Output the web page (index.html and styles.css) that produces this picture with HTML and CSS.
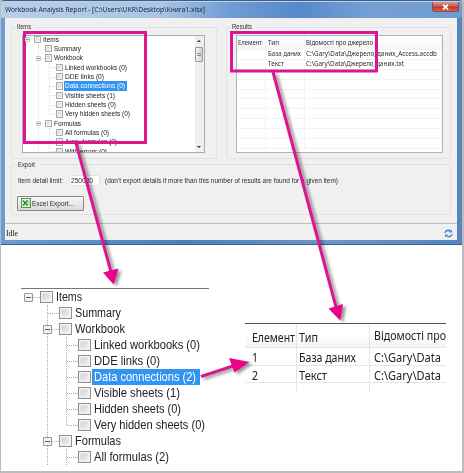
FILE: index.html
```html
<!DOCTYPE html>
<html lang="uk">
<head>
<meta charset="utf-8">
<title>Workbook Analysis Report</title>
<link rel="stylesheet" href="styles.css">
</head>
<body>
<div class="page">
  <section class="window">
    <header class="titlebar"><span class="fit" data-w="200">Workbook Analysis Report - [C:\Users\UKR\Desktop\Книга1.xlsx]</span>
      <span class="close"><svg width="7" height="6" viewBox="0 0 7 6"><path d="M1 .7 6 5.3M6 .7 1 5.3" stroke="#fff" stroke-width="1.7"/></svg></span>
    </header>
    <div class="client">
      <div class="groups">
        <div class="group group-items">
          <span class="legend"><span class="fit" data-w="14">Items</span></span>
          <div class="listbox">
            <div class="tree small">
              <div class="row open"><i class="exp"></i><i class="cb"></i><span class="fit" data-w="16">Items</span></div>
              <div class="kids">
                <div class="row"><i class="cb"></i><span class="fit" data-w="27">Summary</span></div>
                <div class="row open"><i class="exp"></i><i class="cb"></i><span class="fit" data-w="29">Workbook</span></div>
                <div class="kids closed">
                  <div class="row"><i class="cb"></i><span class="fit" data-w="62">Linked workbooks (0)</span></div>
                  <div class="row"><i class="cb"></i><span class="fit" data-w="39">DDE links (0)</span></div>
                  <div class="row"><i class="cb"></i><b class="sel"></b><span class="fit picked" data-w="60">Data connections (0)</span></div>
                  <div class="row"><i class="cb"></i><span class="fit" data-w="50">Visible sheets (1)</span></div>
                  <div class="row"><i class="cb"></i><span class="fit" data-w="51">Hidden sheets (0)</span></div>
                  <div class="row"><i class="cb"></i><span class="fit" data-w="65">Very hidden sheets (0)</span></div>
                </div>
                <div class="row open"><i class="exp"></i><i class="cb"></i><span class="fit" data-w="27">Formulas</span></div>
                <div class="kids">
                  <div class="row"><i class="cb"></i><span class="fit" data-w="44">All formulas (0)</span></div>
                  <div class="row"><i class="cb"></i><span class="fit" data-w="52">Array formulas (0)</span></div>
                  <div class="row"><i class="cb"></i><span class="fit" data-w="42">With errors (0)</span></div>
                </div>
              </div>
            </div>
            <div class="scroll"><i class="up"></i><i class="thumb"></i><i class="down"></i></div>
          </div>
        </div>
        <div class="group group-results">
          <span class="legend"><span class="fit" data-w="20">Results</span></span>
          <div class="results">
            <div class="cells head"><p><span class="fit" data-w="24">Елемент</span></p><p><span class="fit" data-w="11">Тип</span></p><p><span class="fit" data-w="67">Відомості про джерело</span></p></div>
            <div class="cells"><p></p><p><span class="fit" data-w="33">База даних</span></p><p><span class="fit" data-w="131">C:\Gary\Data\Джерело_даних_Access.accdb</span></p></div>
            <div class="cells"><p></p><p><span class="fit" data-w="16">Текст</span></p><p><span class="fit" data-w="98">C:\Gary\Data\Джерело_даних.txt</span></p></div>
            <div class="cells"><p></p><p></p><p></p></div>
            <div class="cells"><p></p><p></p><p></p></div>
            <div class="cells"><p></p><p></p><p></p></div>
            <div class="cells"><p></p><p></p><p></p></div>
            <div class="cells"><p></p><p></p><p></p></div>
            <div class="cells"><p></p><p></p><p></p></div>
            <div class="cells"><p></p><p></p><p></p></div>
            <div class="cells"><p></p><p></p><p></p></div>
          </div>
        </div>
      </div>
      <div class="group group-export">
        <span class="legend"><span class="fit" data-w="17">Export</span></span>
        <div class="limit"><label><span class="fit" data-w="45">Item detail limit:</span></label><div class="input"><span class="fit" data-w="22">250000</span></div><span class="fit" data-w="233">(don't export details if more than this number of results are found for a given item)</span></div>
        <div class="button">
          <svg width="10" height="10" viewBox="0 0 10 10"><rect x=".5" y=".5" width="9" height="9" fill="#e5f3e2" stroke="#4b9a4c"/><path d="M6 3h3M6 5h3M6 7h3" stroke="#8dbd87" stroke-width=".7"/><path d="m2 2.500 4.500 5m0-5L2 7.500" stroke="#2f8637" stroke-width="1.500"/></svg>
          <span class="fit" data-w="42">Excel Export...</span>
        </div>
      </div>
      <footer class="status"><span class="fit" data-w="12">Idle</span>
        <svg width="9" height="9" viewBox="0 0 9 9" fill="none" stroke="#3f88d0" stroke-width="1.5"><path d="M1 4C1.300 1.500 4.500.4 6.500 2.500M8 5C7.700 7.500 4.500 8.600 2.500 6.500"/><path d="M8 .5v3H5zM1 8.500v-3h3z" fill="#3f88d0" stroke="none"/></svg>
      </footer>
    </div>
  </section>

  <section class="details">
    <div class="tree large">
      <div class="row open"><i class="exp"></i><i class="cb"></i><span class="fit" data-w="26">Items</span></div>
      <div class="kids">
        <div class="row"><i class="cb"></i><span class="fit" data-w="46">Summary</span></div>
        <div class="row open"><i class="exp"></i><i class="cb"></i><span class="fit" data-w="50">Workbook</span></div>
        <div class="kids closed">
          <div class="row"><i class="cb"></i><span class="fit" data-w="106">Linked workbooks (0)</span></div>
          <div class="row"><i class="cb"></i><span class="fit" data-w="66">DDE links (0)</span></div>
          <div class="row"><i class="cb"></i><b class="sel"></b><span class="fit picked" data-w="102">Data connections (2)</span></div>
          <div class="row"><i class="cb"></i><span class="fit" data-w="86">Visible sheets (1)</span></div>
          <div class="row"><i class="cb"></i><span class="fit" data-w="87">Hidden sheets (0)</span></div>
          <div class="row"><i class="cb"></i><span class="fit" data-w="111">Very hidden sheets (0)</span></div>
        </div>
        <div class="row open"><i class="exp"></i><i class="cb"></i><span class="fit" data-w="46">Formulas</span></div>
        <div class="kids">
          <div class="row"><i class="cb"></i><span class="fit" data-w="75">All formulas (2)</span></div>
        </div>
      </div>
    </div>
    <div class="sources">
      <div class="cells head"><p><span class="fit" data-w="43">Елемент</span></p><p><span class="fit" data-w="19">Тип</span></p><p class="raised"><span class="fit" data-w="72">Відомості про</span></p></div>
      <div class="cells"><p><span class="fit" data-w="6">1</span></p><p><span class="fit" data-w="57">База даних</span></p><p><span class="fit" data-w="67">C:\Gary\Data</span></p></div>
      <div class="cells"><p><span class="fit" data-w="6">2</span></p><p><span class="fit" data-w="28">Текст</span></p><p><span class="fit" data-w="67">C:\Gary\Data</span></p></div>
      <div class="cells stub"><p></p><p></p><p></p></div>
    </div>
  </section>

  <svg class="callouts" width="464" height="473" viewBox="0 0 464 473">
    <g fill="none" stroke="#dc1590" stroke-width="3">
      <rect x="24.500" y="32.500" width="121" height="110"/>
      <rect x="231.500" y="32.500" width="145" height="38.500"/>
    </g>
    <g class="arrows" stroke="#dc1590" stroke-width="3">
      <path d="M76 143 111 272"/><path d="M273 72 336 307"/><path d="M201 376.500 233 366"/>
      <g fill="#ec008c" stroke="none"><path d="M103 272.500 118.500 268.500 113.700 284.500z"/><path d="M328.500 308.500 343 304 340.300 320.500z"/><path d="M229 358 249.500 362 234.500 372.500z"/></g>
    </g>
  </svg>
</div>
<script src="fit.js"></script>
</body>
</html>
```
FILE: fit.js
```js
document.querySelectorAll('.fit').forEach(function (el) {
  var natural = el.getBoundingClientRect().width;
  el.style.transform = 'scaleX(' + Number(el.dataset.w) / natural + ')';
});
```
FILE: styles.css
```css
* { box-sizing: border-box; }
body { margin: 0; background: #fff; font-family: "Liberation Sans", sans-serif; color: #222; }
p { margin: 0; }
.page { position: relative; width: 464px; height: 473px; overflow: hidden; border: solid #bcbcbc; border-width: 0 2px 2px 1px; }
.fit { display: inline-block; white-space: pre; transform-origin: 0 50%; }

/* window */
.window { width: 463px; height: 245px; margin-left: -1px; padding: 0 5px 4px; position: relative; background: linear-gradient(90deg, #6c9cd3, #4c7fbd 40%, #6b96c9 70%, #5585bf); border: 1px solid #395d8c; border-width: 1px 1px 1px 0; border-radius: 4px 4px 0 0; }
.titlebar { height: 17px; margin: 0 -5px; padding-left: 5px; line-height: 14px; font-family: "Noto Sans", sans-serif; font-size: 7.5px; color: #182338; background: linear-gradient(90deg, #b9cfe9 0, #a9c4e4 35%, #6e9bd2 50%, #5589ca 65%, #76a0d4 80%, #6f9bcf); border-top: 1px solid #bdd3ed; border-radius: 3px 3px 0 0; overflow: hidden; display: flex; justify-content: space-between; }
.titlebar .fit { width: max-content; }
.close { width: 27px; height: 10px; margin-right: 3px; display: flex; align-items: center; justify-content: center; background: linear-gradient(#dc9c90, #c75043 50%, #b53022 51%, #cf6552); border: 1px solid #8d4c50; border-top: 0; border-radius: 0 0 3px 3px; }
.client { height: 222px; background: #f0f0f0; padding: 6px 6px 0; display: flex; flex-direction: column; color: #2b2b2b; font-size: 7.2px; overflow: hidden; }
.groups { display: flex; justify-content: space-between; height: 135px; }
.group { border: 1px solid #dfe3e5; border-radius: 2px; margin-top: 3px; height: 132px; }
.group-items { width: 206px; padding: 7px 0 0 10px; }
.group-results { width: 225px; padding: 7px 0 0 9px; }
.legend { display: block; float: left; height: 8px; line-height: 8px; margin: -12px 0 0 -6px; padding: 0 1px; background: #f0f0f0; }
.group-results .legend { margin-left: -5px; }
.listbox { display: flex; justify-content: space-between; width: 183px; height: 118px; margin-left: -.5px; background: #fff; border: 1px solid #a7abb1; overflow: hidden; }
.scroll { width: 9px; background: #efefef; display: flex; flex-direction: column; align-items: center; }
.up, .down { width: 0; height: 0; border: 2px solid transparent; }
.up { border-bottom: 2px solid #333; margin-top: 2px; }
.down { border-top: 2px solid #333; margin-top: auto; margin-bottom: 2px; }
.thumb { width: 8px; height: 15px; margin-top: 5px; border: 1px solid #999; border-radius: 1px; background: linear-gradient(#888, #888) 50% 5px / 4px 1px no-repeat, linear-gradient(#888, #888) 50% 7px / 4px 1px no-repeat, linear-gradient(90deg, #f4f4f4, #d0d0d0); }

/* tree */
.tree { --k: 1; font-size: calc(13px * var(--k)); color: #222; }
.tree.small { --k: .5833; padding-left: 2px; margin-top: -1.200px; }
.row { position: relative; height: calc(16px * var(--k)); line-height: calc(16px * var(--k)); padding-left: calc(16px * var(--k)); display: flex; align-items: center; }
.row .cb { width: calc(12.500px * var(--k)); height: calc(12.500px * var(--k)); margin-right: calc(3.500px * var(--k)); flex: none; border: 1px solid #8f8f8f; background: linear-gradient(135deg, #c9cdd2, #f6f6f6); box-shadow: inset 0 0 0 calc(1.500px * var(--k)) #f3f3f3; position: relative; }
.row .exp { position: absolute; left: 0; top: calc(3.500px * var(--k)); width: calc(9px * var(--k)); height: calc(9px * var(--k)); border: 1px solid #969696; border-radius: 1px; background: linear-gradient(#3f5e9a, #3f5e9a) 50% 50% / 5px 1px no-repeat, #f4f4f4; z-index: 2; }
.small .exp { background: linear-gradient(#999, #999) 50% 50% / 3px 1px no-repeat, #f6f6f6; border-color: #c4c4c4; }
.small .cb { border-color: #aaa; }
.row::before { content: ""; position: absolute; left: calc(4.500px * var(--k)); top: 50%; width: calc(11px * var(--k)); border-top: 1px dotted #aaa; }
.small .row::before, .small .kids::before { border-color: #ddd; }
.kids { position: relative; padding-left: calc(19px * var(--k)); }
.kids::before { content: ""; position: absolute; top: 0; bottom: 0; left: calc(23px * var(--k)); border-left: 1px dotted #aaa; }
.kids.closed::before { bottom: calc(8px * var(--k)); }
.sel { position: absolute; left: calc(30px * var(--k)); top: 0; width: calc(108px * var(--k)); height: 100%; background: #3295f4; }
.row .picked { position: relative; color: #fff; }

/* results */
.cells { display: grid; }
.results { width: 207px; height: 118px; background: #fff; border: 1px solid #b1b5b9; overflow: hidden; font-family: "Noto Sans", sans-serif; font-size: 6.6px; }
.results .cells { grid-template-columns: 29px 39px 1fr; height: 9.9px; line-height: 7.500px; border-bottom: 1px solid #f1f3f5; }
.results .cells p { padding-left: 1px; border-right: 1px solid #f1f3f5; }
.results .cells p:nth-child(2) { padding-left: 2px; }
.results .head { height: 14px; line-height: 13px; background: linear-gradient(#fff, #f5f6f8); }

/* export */
.group-export { margin-top: 5px; height: 51px; padding: 9px 0 0 6px; flex: none; }
.group-export .legend { margin: -13px 0 0 -1px; }
.limit { display: flex; align-items: center; height: 12px; width: 440px; line-height: 11px; }
.limit label { width: 51px; padding-left: 0; }
.input { width: 31px; height: 11px; line-height: 10px; margin-right: 5px; padding-left: 1px; background: #fff; border: 1px solid #e2e5e8; flex: none; }
.limit { margin-top: .5px; }
.button { width: 67px; height: 15px; margin: 9px 0 0 -1px; padding-left: 3px; display: flex; align-items: center; gap: 1px; border: 1px solid #888; border-radius: 1px; background: linear-gradient(#f5f5f5, #eaeaea 50%, #d8d8d8); font-size: 7.6px; }
.status { height: 17px; margin: 8px -6px 0; padding: 2px 4px 0 1px; display: flex; align-items: center; justify-content: space-between; border-top: 1px solid #bfbfbf; font: 8.5px "Liberation Serif", serif; color: #111; }

/* enlarged details */
.details { display: flex; height: 226px; padding-top: 43px; }
.large { margin-left: 20px; width: 188px; height: 178px; padding-left: 3px; border-top: 1px solid #777; overflow: hidden; }
.sources { width: 201px; margin: 35px 0 0 36px; border-top: 1px solid #555; font-family: "Noto Sans", sans-serif; font-size: 12px; height: 70px; overflow: hidden; }
.sources .cells { grid-template-columns: 52px 73px 1fr; height: 17.500px; line-height: 19px; border-bottom: 1px solid #e4e6e9; }
.sources .cells p { border-right: 1px solid #e4e6e9; padding-left: 2px; }
.sources .cells p:first-child { padding-left: 7px; }
.sources .cells p:last-child { border: 0; padding-left: 4px; }
.sources .head { height: 24px; line-height: 27px; background: linear-gradient(#fff 40%, #f3f4f7); }
.sources .raised { line-height: 24px; }
.sources .stub { height: 9px; border: 0; }

.callouts { position: absolute; left: -1px; top: 0; }
.arrows { filter: drop-shadow(3px 2px 1.500px rgba(0, 0, 0, .4)); }
```
